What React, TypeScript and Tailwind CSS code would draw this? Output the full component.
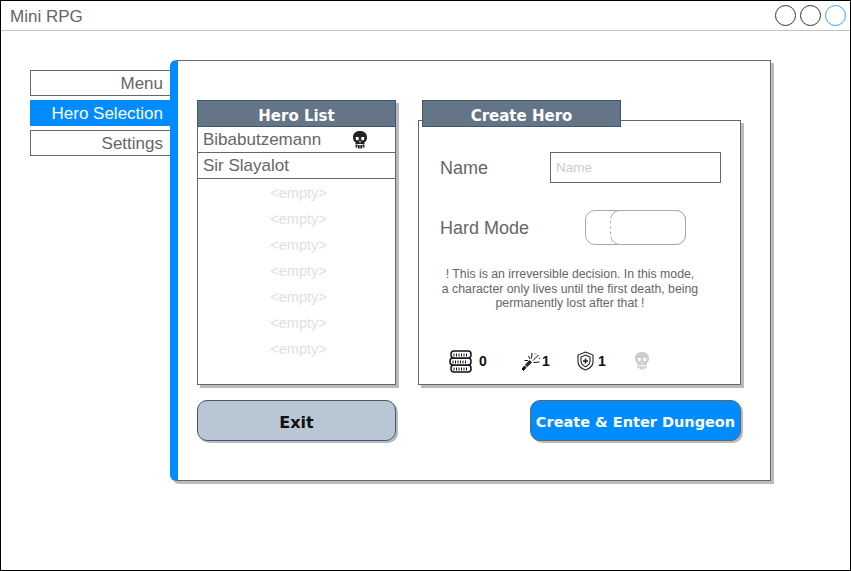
const EMPTY_SLOTS = [0, 1, 2, 3, 4, 5, 6];
const COMIC = 'font-["Comic_Sans_MS","DejaVu_Sans",sans-serif] font-bold';

function SkullIcon({ className }: { className: string }) {
  return (
    <svg className={className} width="16" height="18" viewBox="0 0 16 18" fill="currentColor">
      <path
        fillRule="evenodd"
        d="M8 0C3.500 0 1 2.500 1 6.500c0 2.300 .8 3.800 2.500 4.800V13h9v-1.700c1.700-1 2.500-2.500 2.500-4.800C15 2.500 12.500 0 8 0zM3.500 6h3.200v3.200H4.200zM9.300 6h3.200l-.7 3.200H9.300zM8 9.500l1 2H7z"
      />
      <path d="M3.500 13.500h2v3h-2zM6 14h1.700v3.500H6zM8.300 14H10v3.500H8.300zM10.500 13.500h2v3h-2z" />
    </svg>
  );
}

function CoinsIcon() {
  return (
    <svg width="24" height="23" viewBox="0 0 24 23" fill="white" stroke="#111" strokeWidth="1.5">
      <rect x="2" y="15" width="20" height="7" rx="3" />
      <rect x="1" y="8" width="21" height="7" rx="3" />
      <rect x="2" y="1" width="20" height="7" rx="3" />
      <path d="M5 3.500v3M7.500 3.500v3M10 3.500v3M12.500 3.500v3M15 3.500v3M17.500 3.500v3M4 10.500v3M6.500 10.500v3M9 10.500v3M11.500 10.500v3M14 10.500v3M16.500 10.500v3M5 17.500v3M7.500 17.500v3M10 17.500v3M12.500 17.500v3M15 17.500v3M17.500 17.500v3" strokeWidth="1" />
    </svg>
  );
}

function WandIcon() {
  return (
    <svg width="20" height="20" viewBox="0 0 20 20" fill="none" stroke="#111" strokeWidth="1">
      <path d="M1 18l2.500-3 1.500 1.500L2.500 19.500z" fill="#111" />
      <path d="M4.500 14l4-4.500 2 2-4.500 4z" fill="#333" />
      <path d="M9 8L7.500 5M10.500 7.500L11 2M12 9.500L17.500 4M12.500 11.500l6-.5M7 9.500H3.500M14 2.500l1 1M18 7l1 .5" />
    </svg>
  );
}

function ShieldIcon() {
  return (
    <svg width="17" height="20" viewBox="0 0 17 20" fill="none" stroke="#222" strokeWidth="1.1">
      <path d="M8.500 1L16 4v7c0 4-3.500 6.500-7.500 8C4.500 17.500 1 15 1 11V4z" />
      <path d="M8.500 4L13 6v4.500c0 2.500-2 4-4.500 5.200C6 14.500 4 13 4 10.500V6z" />
      <path d="M8.500 7.500v5M6 10h5" strokeWidth="1.6" />
    </svg>
  );
}

function Stat({ icon, value, className }: { icon: React.ReactNode; value?: string; className: string }) {
  return (
    <div className={`flex items-center ${className}`}>
      {icon}
      {value && <span className="text-[14px] font-bold text-[#111] leading-none">{value}</span>}
    </div>
  );
}

export default function App() {
  return (
    <div className='w-[851px] h-[571px] border border-black bg-white flex flex-col font-["Liberation_Sans",sans-serif] overflow-hidden'>
      <div className="h-[30px] shrink-0 border-b border-[#c4c4c4] flex items-center justify-between pl-[9px] pr-[4px]">
        <span className="text-[17px] text-[#666] pt-[2px]">Mini RPG</span>
        <div className="flex gap-[4px]">
          <div className="w-[21px] h-[21px] rounded-full border border-[#333]" />
          <div className="w-[21px] h-[21px] rounded-full border border-[#333]" />
          <div className="w-[21px] h-[21px] rounded-full border border-[#3d9eff]" />
        </div>
      </div>

      <div className="flex pl-[29px] pt-[29px]">
        <div className="w-[140px] pt-[10px] flex flex-col gap-[4px] text-[17px] text-right">
          <div className="h-[26px] border border-r-0 border-[#666] text-[#666] leading-[26px] pr-[7px]">Menu</div>
          <div className="h-[26px] bg-[#008cff] text-white leading-[28px] pr-[7px]">Hero Selection</div>
          <div className="h-[26px] border border-r-0 border-[#666] text-[#666] leading-[26px] pr-[7px]">Settings</div>
        </div>

        <div className="w-[601px] h-[421px] bg-white border border-[#666] border-l-[8px] border-l-[#008cff] rounded-l-[6px] shadow-[3px_3px_0_#bbb] pl-[19px] pt-[39px]">
          <div className="flex items-start">
            <div className="w-[199px] h-[285px] border border-[#666] shadow-[3px_3px_0_#bbb]">
              <div className={`h-[27px] -mt-px -mx-px bg-[#647587] border border-[#40566e] text-white text-center text-[15px] leading-[30px] ${COMIC}`}>
                Hero List
              </div>
              <div className="h-[26px] border-b border-[#666] flex items-center justify-between pl-[5px] pr-[27px] text-[17px] text-[#666]">
                <span className="pt-[1px]">Bibabutzemann</span>
                <SkullIcon className="text-[#222]" />
              </div>
              <div className="h-[26px] border-b border-[#666] flex items-center pl-[5px] text-[17px] text-[#666]">
                <span className="pt-[1px]">Sir Slayalot</span>
              </div>
              {EMPTY_SLOTS.map(i => (
                <div key={i} className="h-[26px] flex items-center justify-center pl-[4px] pt-[4px] text-[14.5px] text-[#e0e0e0]">
                  {'<empty>'}
                </div>
              ))}
            </div>

            <div className="relative w-[323px] h-[265px] ml-[22px] mt-[20px] border border-[#666] shadow-[3px_3px_0_#bbb]">
              <div className={`absolute left-[3px] top-[-21px] w-[199px] h-[27px] bg-[#647587] border border-[#40566e] text-white text-center text-[15px] leading-[30px] ${COMIC}`}>
                Create Hero
              </div>
              <div className="flex items-center pl-[21px] pt-[31px]">
                <span className="w-[110px] text-[18px] text-[#666] pt-[2px]">Name</span>
                <div className="w-[171px] h-[31px] border border-[#666] pl-[5px] text-[13.5px] leading-[29px] text-[#ccc]">Name</div>
              </div>
              <div className="flex items-center pl-[21px] pt-[27px]">
                <span className="w-[145px] text-[18px] text-[#666] pt-[2px]">Hard Mode</span>
                <div className="relative w-[101px] h-[35px] border border-[#aaa] rounded-[10px]">
                  <div className="absolute left-[24px] top-[-1px] w-[76px] h-[35px] border border-[#aaa] rounded-[10px] bg-white">
                    <div className="absolute left-[-1px] top-[7px] h-[19px] border-l border-dashed border-white" />
                  </div>
                </div>
              </div>
              <p className="pt-[22px] pl-[20px] w-[282px] text-center text-[12.3px] leading-[14.5px] text-[#666]">
                ! This is an irreversible decision. In this mode,
                <br />
                a character only lives until the first death, being
                <br />
                permanently lost after that !
              </p>
              <div className="flex items-center pl-[30px] pt-[39px]">
                <Stat className="w-[72px] gap-[6px]" icon={<CoinsIcon />} value="0" />
                <Stat className="w-[56px] gap-[1px]" icon={<WandIcon />} value="1" />
                <Stat className="w-[57px] gap-[4px]" icon={<ShieldIcon />} value="1" />
                <Stat className="" icon={<SkullIcon className="text-[#ccc]" />} />
              </div>
            </div>
          </div>

          <div className="flex items-center justify-between w-[544px] mt-[15px]">
            <button className={`w-[199px] h-[41px] pt-[4px] rounded-[10px] bg-[#b8c7d3] border border-[#3d5a75] shadow-[2px_2px_0_#bbb] text-[16px] text-[#111] ${COMIC}`}>
              Exit
            </button>
            <button className={`w-[211px] h-[41px] pt-[4px] rounded-[10px] bg-[#008cff] border border-[#666] shadow-[2px_2px_0_#bbb] text-[14.5px] text-white whitespace-nowrap ${COMIC}`}>
              Create &amp; Enter Dungeon
            </button>
          </div>
        </div>
      </div>
    </div>
  );
}
